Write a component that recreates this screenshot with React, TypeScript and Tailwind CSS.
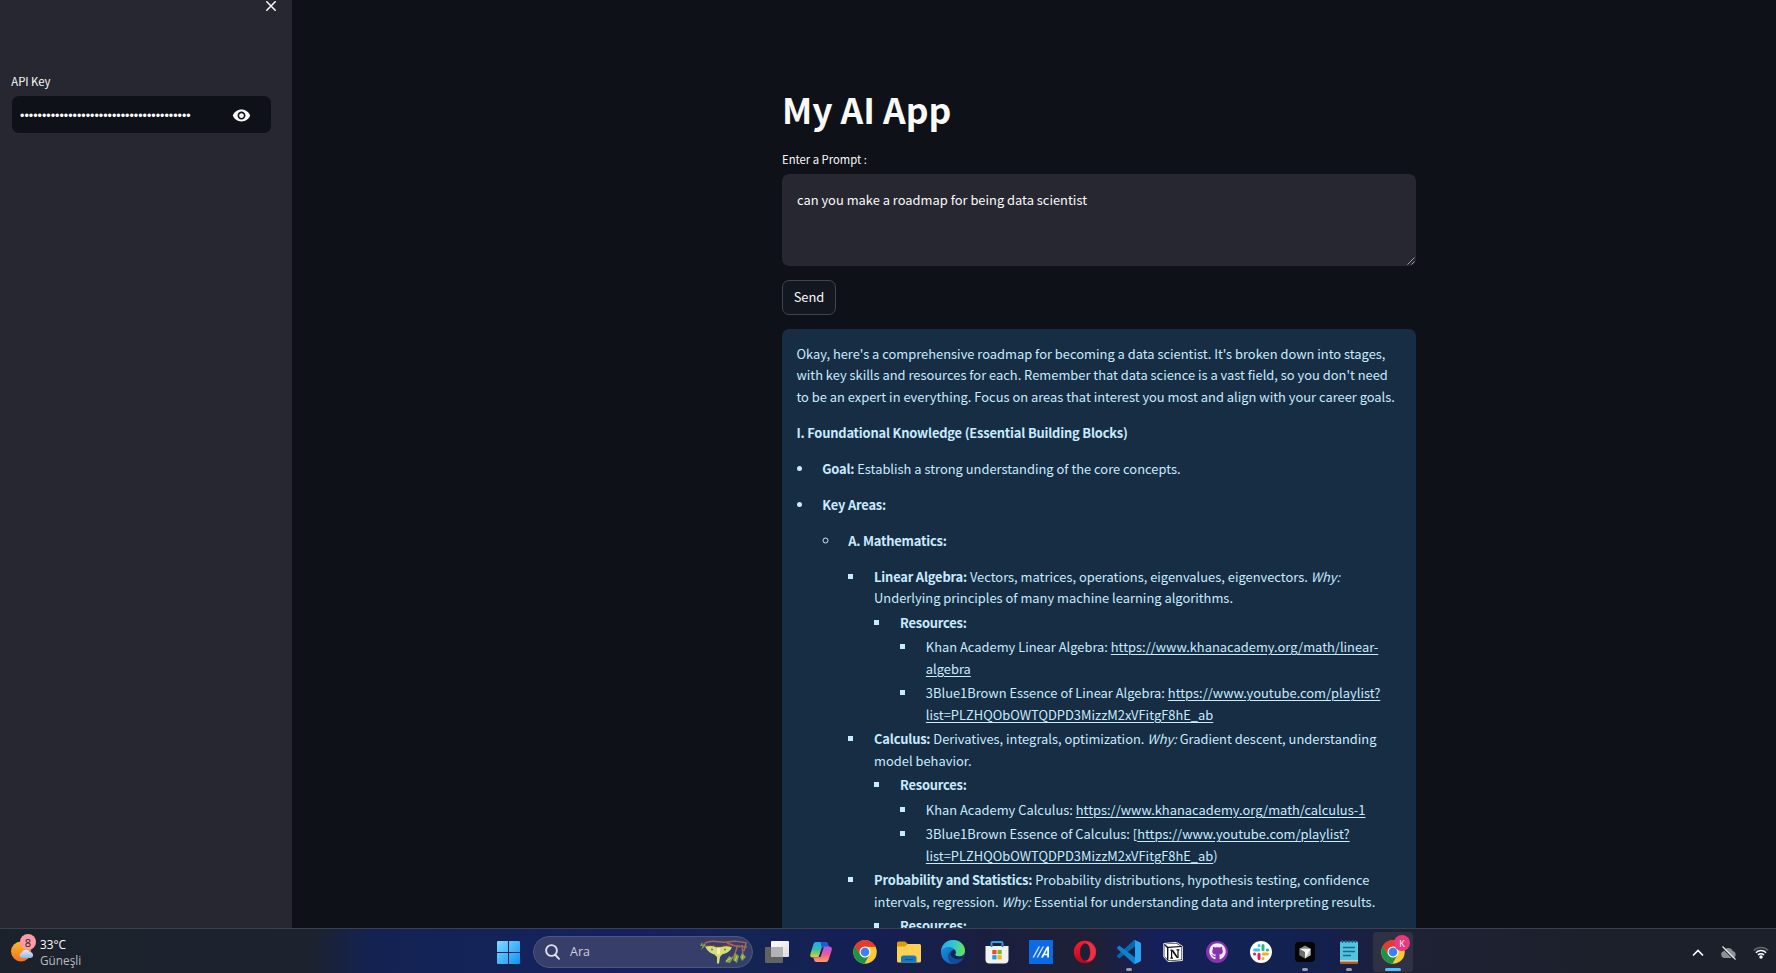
import React from "react";
import { MdVisibility } from "react-icons/md";
import { FaGithub } from "react-icons/fa";

const BODY = "[font-family:'Noto_Sans_CJK_SC',sans-serif]";

function Chrome({ id }: { id: string }) {
  return (
    <svg width="24" height="24" viewBox="0 0 48 48">
      <defs>
        <clipPath id={id}><circle cx="24" cy="24" r="23.5" /></clipPath>
      </defs>
      <g clipPath={`url(#${id})`}>
        <rect width="48" height="48" fill="#fcc934" />
        <path d="M0 0H48V13.5H24L14.9 29.3L3 9Z" fill="#e33b2e" />
        <path d="M3.2 11L14.5 29.3A11 11 0 0 0 33.2 29.3L22 49H0V11Z" fill="#1e9348" />
        <path d="M3.6 12.3L14.5 29.3L13 24A11 11 0 0 1 24 13.2H46V0H8Z" fill="#e33b2e" />
      </g>
      <circle cx="24" cy="24" r="11" fill="#fff" />
      <circle cx="24" cy="24" r="8.8" fill="#3b82f0" />
    </svg>
  );
}

function Moth() {
  return (
    <svg width="50" height="26" viewBox="0 0 50 26">
      <path d="M6 4C14 0 20 4 28 3S38 2 48 4M28 4C36 8 40 7 48 8M39 6C36 11 38 15 33 19M43 6L44 16M47 4L45 12" fill="none" stroke="#a5665a" strokeWidth="1.5" />
      <path d="M2 11L5 4L7 6ZM26 23L30 17L34 19L31 24ZM36 14L40 17L38 24L34 21ZM43 14L47 18L43 22L41 18ZM1 7L3 3L4 7Z" fill="#7fa34c" />
      <path d="M27 22L32 19M36 22L38 17M43 20L44 16" stroke="#c9c66a" strokeWidth="1" />
      <path d="M6 7C12 5 16 8 19 8S27 5 33 8C31 13 27 14.5 23 15.500L21 18L20 24.500L18 24.500L18 18L15.500 15.500C11 14 8 12 6 7Z" fill="#d3df7c" />
      <path d="M6 7C13 5 17 7.500 19 8C22 7.500 28 5 33 8" fill="none" stroke="#7d4030" strokeWidth="1.3" />
      <path d="M18 8.500H21V15H18Z" fill="#f6efb2" />
      <circle cx="13" cy="10.500" r=".9" fill="#8d6235" />
      <circle cx="26" cy="10.500" r=".9" fill="#8d6235" />
    </svg>
  );
}

function TaskView() {
  return (
    <svg width="24" height="24" viewBox="0 0 24 24">
      <defs><linearGradient id="tv" x1="0" y1="0" x2="1" y2="1"><stop stopColor="#fff" /><stop offset="1" stopColor="#dcdcdc" /></linearGradient></defs>
      <rect x="6" y="1" width="18" height="16" rx="1" fill="url(#tv)" />
      <rect x="0" y="7" width="18" height="16" rx="1" fill="#626262" />
      <rect x="6" y="7" width="12" height="10" fill="#b3b3b3" />
    </svg>
  );
}

function Copilot() {
  return (
    <svg width="24" height="24" viewBox="0 0 24 24">
      <defs>
        <linearGradient id="cp1" x1="0" y1="0" x2="0" y2="1"><stop stopColor="#21a8f5" /><stop offset=".5" stopColor="#37bfa7" /><stop offset="1" stopColor="#e8d02c" /></linearGradient>
        <linearGradient id="cp2" x1="0" y1="0" x2="0" y2="1"><stop stopColor="#a35cf0" /><stop offset=".5" stopColor="#f0589a" /><stop offset="1" stopColor="#fba05f" /></linearGradient>
      </defs>
      <path d="M7 2H16.500C18 2 18.600 3 19 4.500L20 7H16C13.500 7 12.800 8.500 12 11L10.500 15.500C10 17 9 17.500 7.500 17.500H4C1.500 17.500 .7 16 1.500 13.500L4.200 5C4.800 3 5.500 2 7 2Z" fill="url(#cp1)" />
      <path d="M11.500 2H16.500C18 2 18.600 3 19 4.500L20 7H16C14.500 7 13.700 7.600 13 9Z" fill="#2458cf" />
      <path d="M17 22H7.500C6 22 5.300 21 5 19.500L4.200 17.500H7.500C10 17.500 10.600 16 11.300 13.700L13 8.500C13.500 7 14.500 6.500 16 6.500H20C22.500 6.500 23.400 8 22.600 10.500L19.800 19C19.200 21 18.500 22 17 22Z" fill="url(#cp2)" />
      <path d="M9.700 17L13 7.500L14.800 7.200L11.500 17Z" fill="#182050" />
    </svg>
  );
}

function Folder() {
  return (
    <svg width="24" height="24" viewBox="0 0 24 24">
      <path d="M0 3A1.500 1.500 0 0 1 1.500 1.500H8L11 4V9H0Z" fill="#dc9a0c" />
      <path d="M0 6.500H8L10.500 4H22.500A1.500 1.500 0 0 1 24 5.500V21A1.500 1.500 0 0 1 22.500 22.500H1.500A1.500 1.500 0 0 1 0 21Z" fill="#ffd152" />
      <path d="M4 22.500V18A2.500 2.500 0 0 1 6.500 15.500H17A2.500 2.500 0 0 1 19.500 18V22.500Z" fill="#1379c4" />
      <path d="M8 19.500H16" stroke="#0c5795" strokeWidth="1.300" />
    </svg>
  );
}

function Edge() {
  return (
    <svg width="24" height="24" viewBox="0 0 24 24">
      <defs>
        <linearGradient id="ed1" x1="0" y1=".3" x2="1" y2=".4"><stop stopColor="#27a9e3" /><stop offset=".55" stopColor="#32c9cf" /><stop offset="1" stopColor="#6ce34a" /></linearGradient>
        <linearGradient id="ed2" x1="0" y1="0" x2="1" y2="1"><stop stopColor="#1c9be6" /><stop offset="1" stopColor="#0d4ba8" /></linearGradient>
      </defs>
      <circle cx="12" cy="12" r="12" fill="url(#ed2)" />
      <path d="M0 11C.8 4.500 5.800 0 12 0C19 0 24 5 24 10.500C24 14.200 21.200 16.300 18 16.300C15.400 16.300 13.900 15.500 14.200 14.600C15.400 13 15 10.500 13 9C9.500 6 3 6.500 0 11Z" fill="url(#ed1)" />
      <path d="M9.300 12C8 18 14 22 22.400 17.800C20.600 21.500 16.500 24 12 24C6.500 21 5.500 14.500 9.300 12Z" fill="#114c9e" />
      <path d="M14.200 14.600C13.900 15.600 15.400 16.500 18 16.500C20 16.500 22 15.900 23.300 14.500L22.200 18C15 21.200 9.500 18 9.400 13.500C9.500 11.500 11 10 13.500 9.500C15 11 15.200 13 14.200 14.600Z" fill="#17254f" />
    </svg>
  );
}

function Store() {
  return (
    <svg width="24" height="24" viewBox="0 0 24 24">
      <path d="M6.500 8V3.300Q6.500 2 7.800 2H16.200Q17.500 2 17.500 3.300V8" fill="none" stroke="#27a5e6" strokeWidth="1.900" />
      <path d="M.5 6H23.500V19.500A4 4 0 0 1 19.500 23.500H4.500A4 4 0 0 1 .5 19.500Z" fill="#f1f2f5" />
      <path d="M5.600 5H7.400V7H5.600ZM16.600 5H18.400V7H16.600Z" fill="#1c80c8" />
      <rect x="7.300" y="10" width="4.200" height="4.200" fill="#ee4a24" />
      <rect x="12.500" y="10" width="4.200" height="4.200" fill="#7db722" />
      <rect x="7.300" y="15.200" width="4.200" height="4.200" fill="#1a9fe8" />
      <rect x="12.500" y="15.200" width="4.200" height="4.200" fill="#fbb40e" />
    </svg>
  );
}

function MyAsus() {
  return (
    <svg width="24" height="24" viewBox="0 0 24 24">
      <rect width="24" height="24" fill="#0b6be6" />
      <path d="M3.500 17.500L9.500 6.500H11L5 17.500Z" fill="#d6e7ff" />
      <path d="M7.500 17.500L13.500 6.500H15L9 17.500Z" fill="#d6e7ff" />
      <path d="M12 17.500L18 6.500H20V17.500H18.200V9.500L14 17.500Z" fill="#fff" />
      <path d="M15 13.700H19V15.200H14.200Z" fill="#fff" />
    </svg>
  );
}

function Opera() {
  return (
    <svg width="24" height="24" viewBox="0 0 24 24">
      <defs><linearGradient id="op" x1="0" y1="0" x2="0" y2="1"><stop stopColor="#ff1b2d" /><stop offset="1" stopColor="#b8061c" /></linearGradient></defs>
      <path fillRule="evenodd" d="M12 .8A11.200 11.200 0 1 0 12 23.200A11.200 11.200 0 1 0 12 .8ZM12.300 3.200C15 3.200 17 7 17 12S15 20.800 12.300 20.800S7 17 7 12S9.600 3.200 12.300 3.200Z" fill="url(#op)" />
      <path d="M12.300 3.200C15 1.700 18.500 3 20.500 5.500A11.200 11.200 0 0 1 20.500 18.500C18.500 21 15 22.300 12.300 20.800C15.500 20.800 17.500 17 17.500 12S15.500 3.200 12.300 3.200Z" fill="#ed3044" />
    </svg>
  );
}

function VsCode() {
  return (
    <svg width="24" height="24" viewBox="0 0 100 100">
      <path d="M96.500 10.700L75.900 .8C73.500 -.4 70.700 .1 68.800 2L1.300 63.500C-.5 65.200 -.5 68.100 1.300 69.700L6.800 74.700C8.300 76.100 10.500 76.200 12.100 74.900L93.400 13.300C96.100 11.200 100 13.200 100 16.700V16.400C100 14 98.600 11.800 96.500 10.700Z" fill="#0b67ab" />
      <path d="M96.500 89.300L75.900 99.200C73.500 100.400 70.700 99.900 68.800 98L1.300 36.500C-.5 34.800 -.5 31.900 1.300 30.300L6.800 25.300C8.300 23.900 10.500 23.800 12.100 25.100L93.400 86.700C96.100 88.800 100 86.800 100 83.300V83.600C100 86 98.600 88.200 96.500 89.300Z" fill="#1180ca" />
      <path d="M75.900 99.200C73.500 100.400 70.600 99.900 68.700 98C71 100.300 75 98.700 75 95.300V4.700C75 1.300 71 -.3 68.700 2C70.600 .1 73.500 -.4 75.900 .8L96.500 10.700C98.600 11.700 100 13.900 100 16.300V83.700C100 86.100 98.600 88.300 96.500 89.300Z" fill="#2aa5f2" />
    </svg>
  );
}

function Notion() {
  return (
    <svg width="20" height="20" viewBox="0 0 20 20">
      <path d="M.8 1.500L13.500 .4L19.400 4.200V18.500L5 19.600L.8 14.800Z" fill="#111" stroke="#fff" strokeWidth=".9" />
      <path d="M1.800 2.300L13.300 1.400L17.300 3.900L5 4.700Z" fill="#fff" />
      <path d="M1.500 3.600L4 6V17L1.500 14.200Z" fill="#fff" />
      <path d="M5.400 5.900L18.400 5.100V17.500L5.400 18.500Z" fill="#fff" />
      <path d="M7.300 8.200H9.300M7.300 16.100H10M13.500 7.900H16.500M8.600 8.300V16M15 8V15.800" stroke="#111" strokeWidth="1.200" fill="none" />
      <path d="M8 8H10.200L15.600 15.900H13.700Z" fill="#111" />
    </svg>
  );
}

function Github() {
  return (
    <span className="flex h-[22px] w-[22px] items-center justify-center rounded-full bg-[#8434ae]">
      <FaGithub size={17} color="#f4eafa" />
    </span>
  );
}

function Slack() {
  return (
    <svg width="22" height="22" viewBox="0 0 22 22">
      <circle cx="11" cy="11" r="11" fill="#fff" />
      <g strokeWidth="3" strokeLinecap="round">
        <path d="M4.600 9H8.800M9 4.500H9.100" stroke="#36c5f0" />
        <path d="M13 4.600V8.800M17.400 9H17.500" stroke="#2eb67d" />
        <path d="M13.200 13H17.400M13 17.400H13.100" stroke="#ecb22e" />
        <path d="M9 13.200V17.400M4.500 13H4.600" stroke="#e01e5a" />
      </g>
    </svg>
  );
}

function Cursor() {
  return (
    <svg width="20" height="20" viewBox="0 0 20 20">
      <rect width="20" height="20" rx="4" fill="#050505" />
      <path d="M10 3.500L15.700 6.800L10 10L4.300 6.800Z" fill="#8a8a8a" />
      <path d="M4.300 6.800L10 10V16.500L4.300 13.200Z" fill="#6e6e6e" />
      <path d="M10 10L15.700 6.800V13.200L10 16.500Z" fill="#bdbdbd" />
      <path d="M4.300 6.800H15.700L10 16.500V10Z" fill="#f4f4f4" />
    </svg>
  );
}

function Notepad() {
  return (
    <svg width="18" height="24" viewBox="0 0 18 24">
      <rect y="19" width="18" height="5" rx="1" fill="#b5591c" />
      <path d="M0 20H18V21.500H0Z" fill="#f1efe9" />
      <rect y="1.500" width="18" height="19" rx="1" fill="#55c4de" />
      <path d="M2.500 0V3M5.700 0V3M9 0V3M12.300 0V3M15.500 0V3" stroke="#155f7c" strokeWidth="1.200" />
      <path d="M3 7.500H15M3 11.500H15M3 15.500H11" stroke="#0f6e8e" strokeWidth="1.600" />
    </svg>
  );
}

function Task({ children, running }: { children: React.ReactNode; running?: boolean }) {
  return (
    <div className="relative flex h-full w-11 shrink-0 items-center justify-center pt-px">
      {children}
      {running && <span className="absolute bottom-[2px] left-[19px] h-[3px] w-[6px] rounded-full bg-[#9a9ca8]" />}
    </div>
  );
}

function Weather() {
  return (
    <div className="flex h-full w-[486px] shrink-0 items-start pl-[11px]">
      <div className="relative mt-[12px] h-[22px] w-[24px]">
        <svg width="24" height="22" viewBox="0 0 24 22">
          <defs>
            <linearGradient id="sun" x1="0" y1="0" x2="0" y2="1"><stop stopColor="#f7bb2c" /><stop offset="1" stopColor="#f2711c" /></linearGradient>
            <linearGradient id="cl" x1="0" y1="0" x2="0" y2="1"><stop stopColor="#e3edfb" /><stop offset="1" stopColor="#8fb4ec" /></linearGradient>
          </defs>
          <circle cx="10" cy="10.500" r="10" fill="url(#sun)" />
          <path d="M11 17A2.800 2.800 0 0 1 10.800 11.500A4.300 4.300 0 0 1 18.500 11A3 3 0 1 1 19.500 17Z" fill="url(#cl)" />
        </svg>
        <span className="absolute -top-[7px] left-[9px] flex h-4 w-4 items-center justify-center rounded-full bg-[#fc9ba5] text-[11px] leading-none text-[#1a1a1a]">8</span>
      </div>
      <div className="ml-[5px] mt-[7px] flex flex-col text-[11.800px] leading-[16px]">
        <span className="text-white">33°C</span>
        <span className="text-[#b9bcc2]">Güneşli</span>
      </div>
    </div>
  );
}

function Taskbar() {
  return (
    <footer className="flex h-[45px] w-full shrink-0 border-t border-[#3d404a] bg-[linear-gradient(90deg,#1c222c_0px,#1c232e_310px,#142252_370px,#13235a_520px,#181f60_640px,#142453_750px,#141f54_860px,#1b1f3d_1010px,#1e2036_1090px,#15205a_1160px,#112352_1250px,#141f4d_1330px,#1f2235_1400px,#1b202b_1600px,#1b202b_1776px)] [font-family:'Open_Sans',sans-serif]">
      <Weather />
      <div className="flex h-full w-11 shrink-0 items-center justify-center pt-[3px]">
        <svg width="23" height="23" viewBox="0 0 23 23">
          <defs><linearGradient id="win" x1="0" y1="0" x2="1" y2="1"><stop stopColor="#7fdcff" /><stop offset="1" stopColor="#0d93f5" /></linearGradient></defs>
          <path d="M0 1A1 1 0 0 1 1 0H11V11H0ZM12 0H22A1 1 0 0 1 23 1V11H12ZM0 12H11V23H1A1 1 0 0 1 0 22ZM12 12H23V22A1 1 0 0 1 22 23H12Z" fill="url(#win)" />
        </svg>
      </div>
      <div className="ml-[3px] mt-[7px] flex h-8 w-[220px] shrink-0 items-center rounded-full border border-[#4d5583] bg-[#363e69] pl-[11px] pr-[3px]">
        <svg width="15" height="16" viewBox="0 0 15 16" fill="none" stroke="#dfe2ee" strokeWidth="1.900" strokeLinecap="round">
          <circle cx="6.500" cy="6.500" r="5.400" /><path d="M10.500 11L14 14.800" />
        </svg>
        <span className="ml-[10px] flex-1 text-[12.500px] text-[#ccd0df]">Ara</span>
        <Moth />
      </div>
      <div className="ml-[2px] flex h-full">
        <Task><TaskView /></Task>
        <Task><Copilot /></Task>
        <Task><Chrome id="chrome-a" /></Task>
        <Task><Folder /></Task>
        <Task><Edge /></Task>
        <Task><Store /></Task>
        <Task><MyAsus /></Task>
        <Task><Opera /></Task>
        <Task running><VsCode /></Task>
        <Task><Notion /></Task>
        <Task><Github /></Task>
        <Task><Slack /></Task>
        <Task running><Cursor /></Task>
        <Task running><Notepad /></Task>
        <div className="relative ml-[2px] mt-[3px] flex h-10 w-10 items-center justify-center rounded bg-[#2f3245]">
          <Chrome id="chrome-b" />
          <span className="absolute left-[21px] top-[3px] flex h-4 w-4 items-center justify-center rounded-full bg-[#e8397b] text-[9px] leading-none text-white">K</span>
          <span className="absolute bottom-[1px] left-3 h-[3px] w-4 rounded-full bg-[#4cc2ff]" />
        </div>
      </div>
      <div className="ml-auto flex items-center gap-[17px] pr-[7px] pt-[3px]">
        <svg className="-mr-px" width="12" height="8" viewBox="0 0 12 8" fill="none" stroke="#fff" strokeWidth="1.600"><path d="M1 6.500L6 1.500L11 6.500" /></svg>
        <svg className="-mr-px" width="17" height="14" viewBox="0 0 17 14">
          <path d="M4 12A3.500 3.500 0 0 1 3.600 5.200A5 5 0 0 1 12.800 5A3.600 3.600 0 0 1 13 12Z" fill="#8c9097" />
          <path d="M2.500 .5L15.500 13.500" stroke="#e6e8ea" strokeWidth="1.300" /><path d="M1.700 1.700L14.300 14" stroke="#1b202b" strokeWidth="1" />
        </svg>
        <svg width="16" height="13" viewBox="0 0 16 13" fill="none" strokeWidth="1.500">
          <path d="M.8 4.500A10 10 0 0 1 15.200 4.500" stroke="#62666e" />
          <path d="M2.900 6.700A7.200 7.200 0 0 1 13.100 6.700M5 9A4.200 4.200 0 0 1 11 9" stroke="#fff" />
          <circle cx="8" cy="11" r="1.700" fill="#fff" />
        </svg>
      </div>
    </footer>
  );
}

const P = ({ children }: { children: React.ReactNode }) => <p className="mb-[14.4px]">{children}</p>;
const Li = ({ children }: { children: React.ReactNode }) => (
  <li className="my-[2.88px] ml-[17.28px] pl-[8.64px]">{children}</li>
);
const A = ({ children }: { children: React.ReactNode }) => (
  <a className="underline decoration-1 underline-offset-2">{children}</a>
);
const B = ({ children }: { children: React.ReactNode }) => <strong className="font-bold tracking-[-0.185px]">{children}</strong>;

function Answer() {
  return (
    <section className="mt-[14px] rounded-[7px] bg-[#172d43] px-[14.4px] pt-[13.6px] text-[12.9px] leading-[21.6px] whitespace-nowrap text-[#c7ebff]">
      <P>
        Okay, here's a comprehensive roadmap for becoming a data scientist. It's broken down into stages,<br />
        with key skills and resources for each. Remember that data science is a vast field, so you don't need<br />
        to be an expert in everything. Focus on areas that interest you most and align with your career goals.
      </P>
      <P><B>I. Foundational Knowledge (Essential Building Blocks)</B></P>
      <ul className="list-disc">
        <Li><P><B>Goal:</B> Establish a strong understanding of the core concepts.</P></Li>
        <Li>
          <P><B>Key Areas:</B></P>
          <ul className="list-[circle]">
            <Li>
              <P><B>A. Mathematics:</B></P>
              <ul className="list-[square]">
                <Li>
                  <B>Linear Algebra:</B> Vectors, matrices, operations, eigenvalues, eigenvectors. <em>Why:</em><br />
                  Underlying principles of many machine learning algorithms.
                  <ul className="list-[square]">
                    <Li>
                      <B>Resources:</B>
                      <ul className="list-[square]">
                        <Li>Khan Academy Linear Algebra: <A>https://www.khanacademy.org/math/linear-<br />algebra</A></Li>
                        <Li>3Blue1Brown Essence of Linear Algebra: <A>https://www.youtube.com/playlist?<br />list=PLZHQObOWTQDPD3MizzM2xVFitgF8hE_ab</A></Li>
                      </ul>
                    </Li>
                  </ul>
                </Li>
                <Li>
                  <B>Calculus:</B> Derivatives, integrals, optimization. <em>Why:</em> Gradient descent, understanding<br />
                  model behavior.
                  <ul className="list-[square]">
                    <Li>
                      <B>Resources:</B>
                      <ul className="list-[square]">
                        <Li>Khan Academy Calculus: <A>https://www.khanacademy.org/math/calculus-1</A></Li>
                        <Li>3Blue1Brown Essence of Calculus: [<A>https://www.youtube.com/playlist?<br />list=PLZHQObOWTQDPD3MizzM2xVFitgF8hE_ab</A>)</Li>
                      </ul>
                    </Li>
                  </ul>
                </Li>
                <Li>
                  <B>Probability and Statistics:</B> Probability distributions, hypothesis testing, confidence<br />
                  intervals, regression. <em>Why:</em> Essential for understanding data and interpreting results.
                  <ul className="list-[square]"><Li><B>Resources:</B></Li></ul>
                </Li>
              </ul>
            </Li>
          </ul>
        </Li>
      </ul>
    </section>
  );
}

export default function App() {
  return (
    <div className={`flex h-[973px] w-[1776px] flex-col overflow-hidden bg-[#0e1117] text-[#fafafa] ${BODY}`}>
      <div className="flex h-[928px] overflow-hidden">
        <aside className="w-[292px] shrink-0 bg-[#262730] pl-3 pr-[21px]">
          <div className="-mr-[5px] flex h-[71px] justify-end">
            <svg className="mt-[1px]" width="10" height="10" viewBox="0 0 10 10" stroke="#fafafa" strokeWidth="1.500"><path d="M.3 .3L9.700 9.700M9.700 .3L.3 9.700" /></svg>
          </div>
          <div className="-ml-[0.7px] h-[25px] text-[11.280px] leading-[20px]">API Key</div>
          <div className="flex h-[37px] items-center justify-between rounded-[7px] bg-[#0e1117] pl-[8px] pr-[20.500px]">
            <span className="pt-[3px] text-[12.500px] leading-none [font-family:'Liberation_Sans',sans-serif]">{"•".repeat(39)}</span>
            <MdVisibility size={19} className="mt-[1px]" />
          </div>
        </aside>
        <main className="flex-1 pl-[490px]">
          <div className="w-[634px] pt-[85px]">
            <h1 className="h-[64px] text-[35.450px] leading-[48px] font-bold">My AI App</h1>
            <div className="h-[25px] text-[11.280px] leading-[20px]">Enter a Prompt :</div>
            <div className="flex h-[92px] flex-col justify-between rounded-[7px] bg-[#262730] pt-[15px] pl-[15px]">
              <span className="text-[12.900px] leading-[22px]">can you make a roadmap for being data scientist</span>
              <svg className="mr-[1px] mb-[1px] self-end" width="8" height="8" viewBox="0 0 8 8" stroke="#b8b8bc" strokeWidth=".8"><path d="M.5 7.500L7.500 .5M4.500 7.500L7.500 4.500" /></svg>
            </div>
            <button className="mt-[14px] flex h-[35px] w-[54px] items-center justify-center rounded-[7px] border border-[#41444c] bg-[#131720] pb-[2px] text-[12.900px]">Send</button>
            <Answer />
          </div>
        </main>
      </div>
      <Taskbar />
    </div>
  );
}
